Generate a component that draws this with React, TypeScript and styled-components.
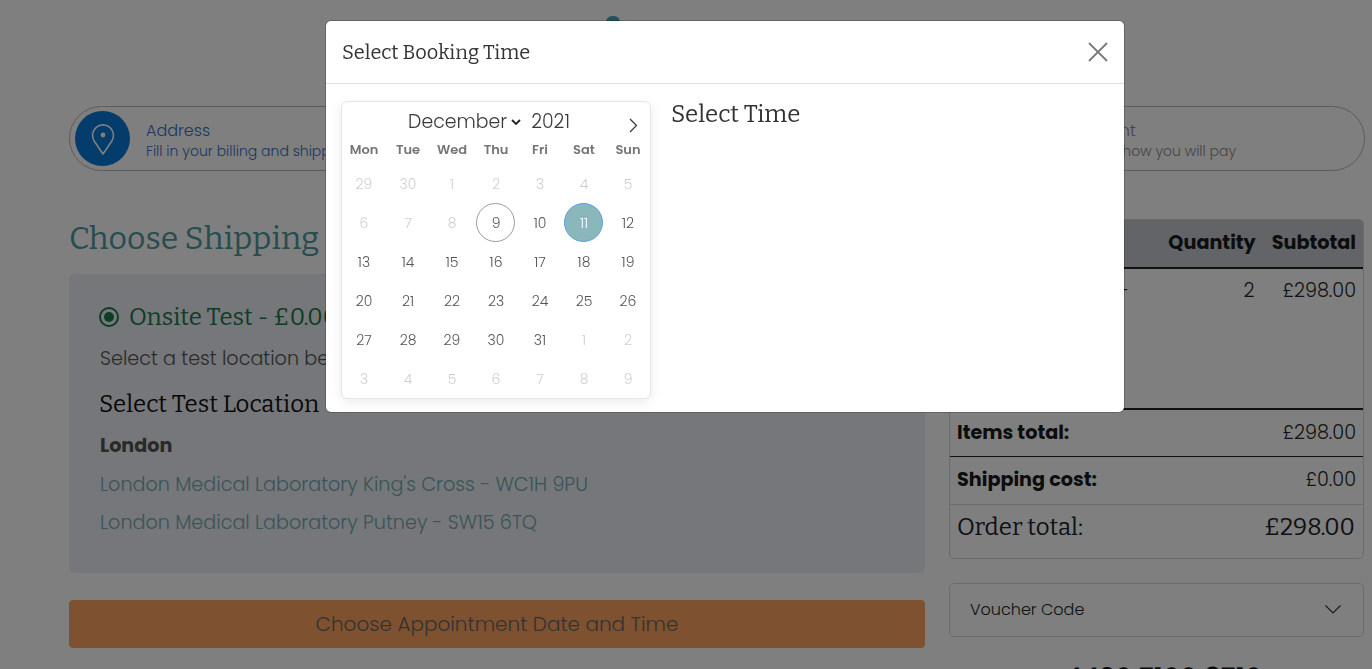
import React from "react";
import styled, { createGlobalStyle } from "styled-components";

const SANS = `"Poppins", "Inter", "Liberation Sans", sans-serif`;
const SERIF = `"Bitter", "DejaVu Serif", "Liberation Serif", serif`;

const GlobalStyle = createGlobalStyle`
  html, body {
    margin: 0;
    height: 100%;
    overflow: hidden;
    background: #fff;
  }
  * {
    box-sizing: border-box;
  }
`;

const Page = styled.div`
  height: 669px;
  overflow: hidden;
  padding: 16px 7px 0 69px;
  font-family: ${SANS};
  font-weight: 300;
  color: #212529;
`;

const LogoTip = styled.div`
  width: 14px;
  height: 24px;
  margin-left: 537px;
  border-radius: 6px 6px 0 0;
  background: #3fa9ae;
`;

const Stepper = styled.div`
  display: grid;
  grid-template-columns: 1fr 1fr 294px;
  align-items: center;
  height: 65px;
  margin-top: 66px;
  border: 1px solid #b8b8b8;
  border-radius: 33px;
  padding: 0 5px;
`;

const Step = styled.div`
  display: flex;
  align-items: center;
  gap: 16px;
`;

const StepIcon = styled.div`
  display: flex;
  align-items: center;
  justify-content: center;
  width: 55px;
  height: 55px;
  border-radius: 50%;
  background: #0878d8;
`;

const StepText = styled.div<{ $active?: boolean }>`
  padding-top: 4px;
  color: ${(p) => (p.$active ? "#3a6cc4" : "#8a8a8a")};
  font-size: 14px;
  line-height: 21px;
`;

const StepTitle = styled.div`
  font-size: 16px;
`;

const Columns = styled.div`
  display: grid;
  grid-template-columns: 856px 415px;
  gap: 24px;
  margin-top: 48px;
`;

const LeftColumn = styled.div`
  padding-top: 0;
`;

const Heading = styled.h2`
  margin: 0 0 14px;
  height: 41px;
  font-family: ${SERIF};
  font-size: 32px;
  font-weight: 400;
  line-height: 39px;
  color: #4f9a9f;
`;

const ShippingPanel = styled.div`
  height: 299px;
  padding: 27px 31px;
  border-radius: 6px;
  background: #ebeff4;
`;

const RadioRow = styled.div`
  display: flex;
  align-items: center;
  gap: 10px;
  height: 32px;
  margin-left: -1px;
`;

const Radio = styled.span`
  display: flex;
  align-items: center;
  justify-content: center;
  width: 20px;
  height: 20px;
  border: 2px solid #1d7a4a;
  border-radius: 50%;
  &::after {
    content: "";
    width: 10px;
    height: 10px;
    border-radius: 50%;
    background: #1d7a4a;
  }
`;

const RadioLabel = styled.span`
  font-family: ${SERIF};
  font-size: 24px;
  font-weight: 400;
  color: #1d7a4a;
`;

const PanelText = styled.p`
  margin: 12px 0 14px;
  font-size: 19.2px;
  line-height: 28px;
  color: #555;
`;

const PanelHeading = styled.h3`
  margin: 0 0 0 -1px;
  font-family: ${SERIF};
  font-size: 24px;
  font-weight: 400;
  line-height: 34px;
  color: #111;
`;

const CityName = styled.div`
  margin-top: 11px;
  font-size: 19.2px;
  font-weight: 700;
  line-height: 28px;
  color: #555;
`;

const LocationLink = styled.a`
  display: block;
  margin-top: 11px;
  font-size: 19.2px;
  line-height: 28px;
  color: #74a9af;
  & + & {
    margin-top: 10px;
  }
`;

const OrangeButton = styled.button`
  display: block;
  width: 100%;
  height: 48px;
  margin-top: 27px;
  border: 0;
  border-radius: 4px;
  background: #fca460;
  font-family: ${SANS};
  font-size: 20px;
  font-weight: 300;
  color: #666;
`;

const Summary = styled.div`
  border: 1px solid #d6d6d6;
  border-radius: 5px;
  height: 340px;
  overflow: hidden;
`;

const SummaryHead = styled.div`
  display: flex;
  justify-content: flex-end;
  gap: 16px;
  align-items: center;
  height: 49px;
  padding: 0 7px 2px;
  border-bottom: 2px solid #222;
  background: #c4c8ce;
  font-size: 19.2px;
  font-weight: 700;
  color: #1a1a1a;
`;

const ProductRow = styled.div`
  display: flex;
  justify-content: flex-end;
  gap: 28px;
  height: 141px;
  padding: 7px 7px 0;
  border-bottom: 2px solid #222;
  font-size: 19.2px;
  line-height: 30px;
`;

const ProductName = styled.span`
  margin-right: auto;
  width: 172px;
  text-align: right;
  white-space: nowrap;
`;

const TotalRow = styled.div<{ $dark?: boolean; $height: number }>`
  display: flex;
  justify-content: space-between;
  align-items: center;
  height: ${(p) => p.$height}px;
  padding: 0 7px 2px;
  border-bottom: 1px solid ${(p) => (p.$dark ? "#222" : "#d6d6d6")};
  font-size: 19.2px;
`;

const TotalLabel = styled.span`
  font-weight: 700;
  color: #1a1a1a;
`;

const OrderRow = styled.div`
  display: flex;
  justify-content: space-between;
  height: 46px;
  padding: 6px 8px 0 7px;
  font-family: ${SERIF};
  font-size: 24px;
  font-weight: 400;
  line-height: 32px;
`;

const Voucher = styled.div`
  display: flex;
  align-items: center;
  justify-content: space-between;
  height: 54px;
  margin-top: 24px;
  padding: 0 22px 2px 20px;
  border: 1px solid #d6d6d6;
  border-radius: 5px;
  font-size: 16px;
`;

const Phone = styled.div`
  margin-top: 26px;
  padding-left: 116px;
  font-size: 26.5px;
  font-weight: 500;
  line-height: 30px;
  color: #111;
`;

const Overlay = styled.div`
  position: fixed;
  inset: 0;
  background: rgba(0, 0, 0, 0.5);
`;

const Modal = styled.div`
  position: fixed;
  top: 21px;
  left: 326px;
  width: 798px;
  height: 391px;
  border-radius: 5px;
  background: #fff;
  box-shadow: 0 0 0 1px rgba(0, 0, 0, 0.2);
  font-family: ${SANS};
`;

const ModalHeader = styled.div`
  display: flex;
  align-items: center;
  justify-content: space-between;
  height: 63px;
  padding: 0 16px;
  border-bottom: 1px solid #dee2e6;
`;

const ModalTitle = styled.h5`
  margin: 0;
  font-family: ${SERIF};
  font-size: 20px;
  font-weight: 400;
  color: #333;
`;

const CloseButton = styled.button`
  display: flex;
  padding: 0;
  border: 0;
  background: none;
  color: #7a7a7a;
`;

const ModalBody = styled.div`
  display: flex;
  gap: 20px;
  padding: 17px 15px;
`;

const Calendar = styled.div`
  width: 310px;
  height: 298px;
  border: 1px solid #e6e6e6;
  border-radius: 6px;
  background: #fff;
  box-shadow: 0 3px 13px rgba(0, 0, 0, 0.08);
`;

const MonthBar = styled.div`
  position: relative;
  display: flex;
  justify-content: center;
  align-items: center;
  gap: 10px;
  height: 36px;
  padding: 3px 14px 0 0;
  font-size: 18.9px;
  font-weight: 300;
  color: #3a3a3a;
`;

const Chevron = styled.span`
  display: flex;
  margin-left: -6px;
  color: #222;
`;

const NextMonth = styled.span`
  position: absolute;
  top: 16px;
  right: 12px;
  display: flex;
  color: #333;
`;

const Weekdays = styled.div`
  display: grid;
  grid-template-columns: repeat(7, 44px);
  height: 26px;
  margin-top: -1px;
  align-items: center;
  text-align: center;
  font-size: 13px;
  font-weight: 600;
  color: #757575;
`;

const DayGrid = styled.div`
  display: grid;
  grid-template-columns: repeat(7, 44px);
  grid-auto-rows: 39px;
  padding-top: 1px;
  justify-items: start;
  align-items: center;
`;

const Day = styled.span<{ $muted?: boolean; $today?: boolean; $selected?: boolean }>`
  display: flex;
  align-items: center;
  justify-content: center;
  width: 39px;
  height: 39px;
  margin-left: 2px;
  padding: 2px 0 0 1px;
  border-radius: 50%;
  font-size: 14px;
  font-weight: 300;
  color: ${(p) => (p.$selected ? "#fff" : p.$muted ? "#cfcfcf" : "#555")};
  background: ${(p) => (p.$selected ? "#89b7bc" : "transparent")};
  border: 1px solid
    ${(p) => (p.$selected ? "#5b9fe0" : p.$today ? "#959ea9" : "transparent")};
`;

const TimeColumn = styled.div`
  margin-top: -1px;
`;

const TimeTitle = styled.h4`
  margin: 0;
  font-family: ${SERIF};
  font-size: 24px;
  font-weight: 400;
  line-height: 28px;
  color: #333;
`;

const WEEKDAYS = ["Mon", "Tue", "Wed", "Thu", "Fri", "Sat", "Sun"];

const DAYS: { label: number; muted: boolean }[] = [
  ...[29, 30, 1, 2, 3, 4, 5, 6, 7, 8].map((label) => ({ label, muted: true })),
  ...Array.from({ length: 23 }, (_, i) => ({ label: i + 9, muted: false })),
  ...[1, 2, 3, 4, 5, 6, 7, 8, 9].map((label) => ({ label, muted: true })),
];

const App: React.FC = () => {
  return (
    <>
      <GlobalStyle />
      <Page>
        <LogoTip />
        <Stepper>
          <Step>
            <StepIcon>
              <svg width="28" height="34" viewBox="0 0 28 34" fill="none" stroke="#fff" strokeWidth="1.6">
                <path d="M14 32 L5.5 19.5 A10.5 10.5 0 1 1 22.5 19.5 Z" strokeLinejoin="round" />
                <circle cx="14" cy="13" r="2.4" fill="#fff" stroke="none" />
              </svg>
            </StepIcon>
            <StepText $active>
              <StepTitle>Address</StepTitle>
              Fill in your billing and shipping details
            </StepText>
          </Step>
          <Step />
          <Step>
            <StepText>
              <StepTitle>Payment</StepTitle>
              Choose how you will pay
            </StepText>
          </Step>
        </Stepper>
        <Columns>
          <LeftColumn>
            <Heading>Choose Shipping Method</Heading>
            <ShippingPanel>
              <RadioRow>
                <Radio />
                <RadioLabel>Onsite Test - £0.00</RadioLabel>
              </RadioRow>
              <PanelText>Select a test location below</PanelText>
              <PanelHeading>Select Test Location</PanelHeading>
              <CityName>London</CityName>
              <LocationLink>London Medical Laboratory King's Cross - WC1H 9PU</LocationLink>
              <LocationLink>London Medical Laboratory Putney - SW15 6TQ</LocationLink>
            </ShippingPanel>
            <OrangeButton>Choose Appointment Date and Time</OrangeButton>
          </LeftColumn>
          <div>
            <Summary>
              <SummaryHead>
                <span>Quantity</span>
                <span>Subtotal</span>
              </SummaryHead>
              <ProductRow>
                <ProductName>PCR Test -</ProductName>
                <span>2</span>
                <span>£298.00</span>
              </ProductRow>
              <TotalRow $dark $height={47}>
                <TotalLabel>Items total:</TotalLabel>
                <span>£298.00</span>
              </TotalRow>
              <TotalRow $height={48}>
                <TotalLabel>Shipping cost:</TotalLabel>
                <span>£0.00</span>
              </TotalRow>
              <OrderRow>
                <span>Order total:</span>
                <span>£298.00</span>
              </OrderRow>
            </Summary>
            <Voucher>
              Voucher Code
              <svg width="16" height="9" viewBox="0 0 16 9" fill="none" stroke="#333" strokeWidth="1.2">
                <path d="M0.5 0.5 L8 8 L15.5 0.5" />
              </svg>
            </Voucher>
            <Phone>4430 7100 8710</Phone>
          </div>
        </Columns>
      </Page>
      <Overlay />
      <Modal>
        <ModalHeader>
          <ModalTitle>Select Booking Time</ModalTitle>
          <CloseButton aria-label="Close">
            <svg width="20" height="20" viewBox="0 0 20 20" fill="none" stroke="currentColor" strokeWidth="1.8">
              <path d="M1 1 L19 19 M19 1 L1 19" />
            </svg>
          </CloseButton>
        </ModalHeader>
        <ModalBody>
          <Calendar>
            <MonthBar>
              <span>December</span>
              <Chevron>
                <svg width="10" height="6" viewBox="0 0 10 6" fill="none" stroke="currentColor" strokeWidth="1.8">
                  <path d="M1 1 L5 5 L9 1" />
                </svg>
              </Chevron>
              <span>2021</span>
              <NextMonth>
                <svg width="10" height="15" viewBox="0 0 10 15" fill="none" stroke="currentColor" strokeWidth="1.2">
                  <path d="M2 1 L8.5 7.5 L2 14" />
                </svg>
              </NextMonth>
            </MonthBar>
            <Weekdays>
              {WEEKDAYS.map((d) => (
                <span key={d}>{d}</span>
              ))}
            </Weekdays>
            <DayGrid>
              {DAYS.map((d, i) => (
                <Day
                  key={i}
                  $muted={d.muted}
                  $today={!d.muted && d.label === 9}
                  $selected={!d.muted && d.label === 11}
                >
                  {d.label}
                </Day>
              ))}
            </DayGrid>
          </Calendar>
          <TimeColumn>
            <TimeTitle>Select Time</TimeTitle>
          </TimeColumn>
        </ModalBody>
      </Modal>
    </>
  );
};

export default App;
